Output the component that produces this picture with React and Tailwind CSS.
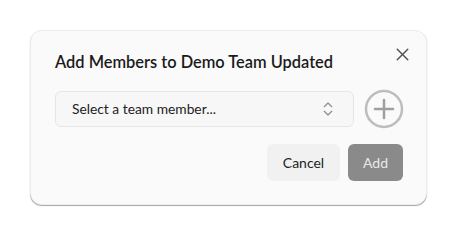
import { ChevronsUpDown, X } from 'lucide-react';

const App = () => {
  return (
    <div className="w-[470px] h-[248px] bg-white pt-[30px] pl-[30px]" style={{ fontFamily: 'Lato, "Noto Sans", sans-serif' }}>
      {/* Dialog */}
      <div className="relative w-[397px] h-[175px] rounded-[12px] bg-[#fafafa] border border-[#ececec] shadow-[0_1px_1px_rgba(0,0,0,0.35)] pl-[24px] pr-[23px] pt-[19px]">
        <button className="absolute right-[13px] top-[13px] text-[#555]">
          <X size={21} strokeWidth={1.7} />
        </button>

        <h2 className="text-[16.4px] leading-[24px] font-semibold text-[#1a1a1a]">
          Add Members to Demo Team Updated
        </h2>

        <div className="flex items-center gap-[10px] mt-[15px]">
          <div className="flex-1 h-[36px] flex items-center justify-between rounded-[6px] border border-[#e6e6e6] bg-[#f7f7f7] pl-[16px] pr-[16px]">
            <span className="text-[13.8px] text-[#222]">Select a team member...</span>
            <ChevronsUpDown size={18} strokeWidth={1.5} className="text-[#888]" />
          </div>
          <svg width="40" height="40" viewBox="0 0 40 40" className="mr-[-1px]">
            <circle cx="20" cy="20" r="18" fill="none" stroke="#bdbdbd" strokeWidth="2.5" />
            <path d="M20 11v18M11 20h18" stroke="#a0a0a0" strokeWidth="2.5" strokeLinecap="round" />
          </svg>
        </div>

        <div className="flex justify-end gap-[8px] mt-[15px]">
          <button className="h-[37px] w-[73px] rounded-[6px] bg-[#f1f1f1] text-[14px] text-[#222]">
            Cancel
          </button>
          <button className="h-[37px] w-[55px] rounded-[6px] bg-[#8a8a8a] text-[14px] text-[#e8e8e8]">
            Add
          </button>
        </div>
      </div>
    </div>
  );
};

export default App;
